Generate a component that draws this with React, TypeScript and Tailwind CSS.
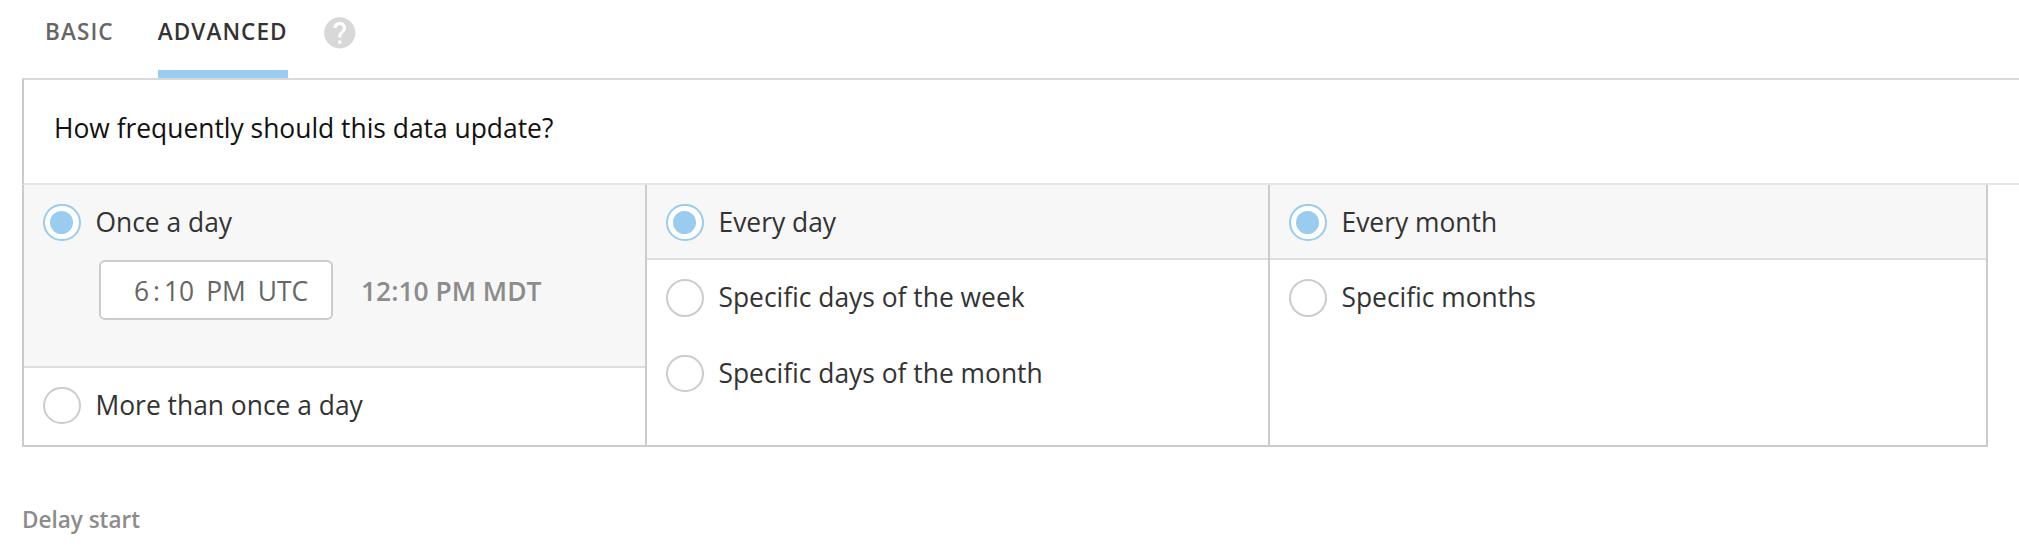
import { MdHelp } from "react-icons/md";

function Radio({ label, checked = false }: { label: string; checked?: boolean }) {
  return (
    <label className="flex h-[75px] items-center gap-[15px] pl-[19px] text-[26.4px] text-[#333333]">
      <span
        className={
          checked
            ? "flex size-[37.5px] shrink-0 items-center justify-center rounded-full border-2 border-[#99ccee] bg-white"
            : "flex size-[37.5px] shrink-0 items-center justify-center rounded-full border-2 border-[#cccccc] bg-white"
        }
      >
        {checked && <span className="size-[23px] rounded-full bg-[#99ccee]" />}
      </span>
      <span className="whitespace-nowrap">{label}</span>
    </label>
  );
}

export default function App() {
  return (
    <div className="h-[546px] w-full overflow-hidden bg-white pl-[22px] font-['Open_Sans',sans-serif]">
      <nav className="flex h-[78px] pl-[23px] text-[22.5px] font-semibold">
        <span className="mr-[44px] h-full pt-[2px] leading-[60px] tracking-[1.1px] text-[#666666]">BASIC</span>
        <span className="h-full w-[130px] border-b-8 border-[#99ccee] pt-[2px] leading-[60px] tracking-[1.1px] whitespace-nowrap text-[#333333]">
          ADVANCED
        </span>
        <MdHelp className="mt-[14px] ml-[33px] size-[37.5px] text-[#d8d8d8]" />
      </nav>

      <div className="h-[107px] border-t-2 border-b-2 border-l-2 border-t-[#d9d9d9] border-b-[#e5e5e5] border-l-[#cccccc] pt-[30px] pl-[30px] text-[26.4px] leading-[36px] text-[#111111]">
        How frequently should this data update?
      </div>

      <div className="grid h-[262px] w-[1966px] grid-cols-[621px_623px_1fr] border-x-2 border-b-2 border-[#cccccc]">
        <section>
          <div className="h-[183px] border-b-2 border-[#dddddd] bg-[#f7f7f7]">
            <Radio label="Once a day" checked />
            <div className="flex items-center pl-[75px]">
              <div className="flex h-[60px] w-[234px] items-center rounded-[6px] border-2 border-[#cccccc] bg-white pt-[3px] pl-[33px] text-[26.4px] text-[#666666]">
                <span>6</span>
                <span className="ml-1">:</span>
                <span className="ml-1">10</span>
                <span className="ml-[12px]">PM</span>
                <span className="ml-[12px]">UTC</span>
              </div>
              <span className="ml-[28px] pt-[3px] text-[26.4px] font-semibold text-[#8c8c8c]">12:10 PM MDT</span>
            </div>
          </div>
          <Radio label="More than once a day" />
        </section>
        <section className="border-l-2 border-[#cccccc]">
          <div className="mb-[0.5px] h-[75px] border-b-2 border-[#dddddd] bg-[#f7f7f7]">
            <Radio label="Every day" checked />
          </div>
          <div className="flex flex-col gap-[0.5px]">
            <Radio label="Specific days of the week" />
            <Radio label="Specific days of the month" />
          </div>
        </section>
        <section className="border-l-2 border-[#cccccc]">
          <div className="mb-[0.5px] h-[75px] border-b-2 border-[#dddddd] bg-[#f7f7f7]">
            <Radio label="Every month" checked />
          </div>
          <Radio label="Specific months" />
        </section>
      </div>

      <p className="pt-[57px] text-[22.5px] leading-[32px] font-semibold text-[#8c8c8c]">Delay start</p>
    </div>
  );
}
